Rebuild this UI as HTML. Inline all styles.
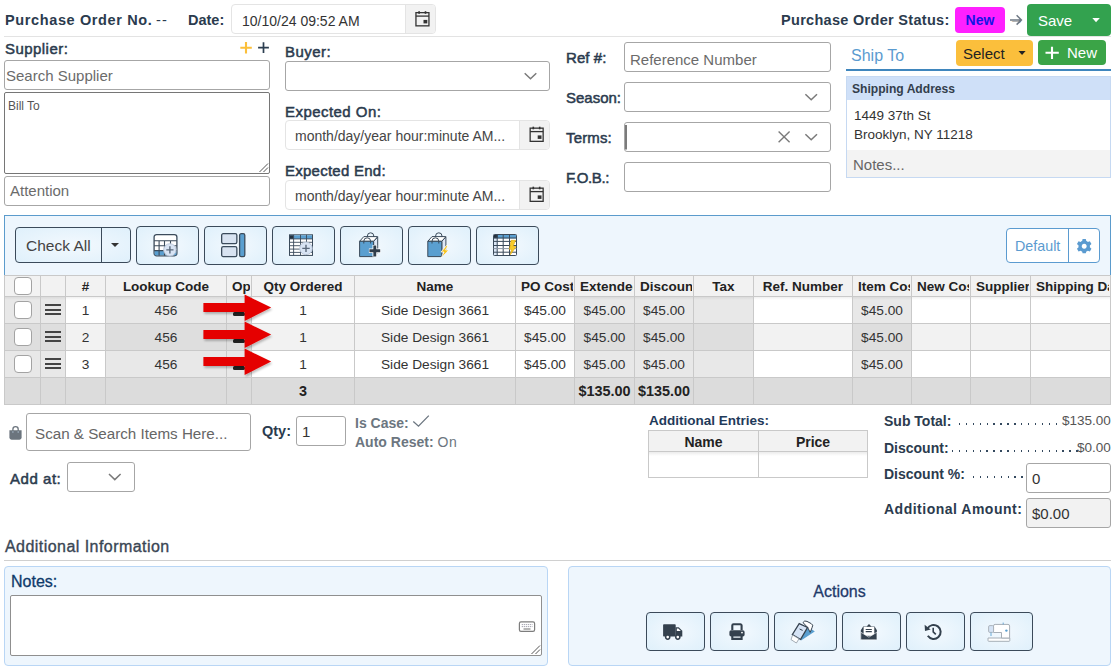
<!DOCTYPE html>
<html><head><meta charset="utf-8">
<style>
html,body{margin:0;padding:0;}
body{width:1115px;height:670px;overflow:hidden;background:#fff;position:relative;font-family:"Liberation Sans",sans-serif;color:#2a3a4c;}
.a{position:absolute;}
.t{position:absolute;white-space:nowrap;line-height:1;}
.b{font-weight:bold;}
.inp{position:absolute;box-sizing:border-box;border:1px solid #a6a6a6;border-radius:3px;background:#fff;}
.dt{position:absolute;box-sizing:border-box;border:1px solid #e4e4e4;border-radius:4px;background:#fff;overflow:hidden;}
.dt .cal{position:absolute;right:0;top:0;bottom:0;width:29px;background:#f2f2f2;border-left:1px solid #e4e4e4;}
.lbl{font-size:14.5px;font-weight:bold;color:#2b3b4e;}
.sb{font-size:15px;font-weight:normal;-webkit-text-stroke:0.5px #2b3b4e;letter-spacing:0.45px;}
.chev{position:absolute;width:9px;height:9px;border-right:1.6px solid #555;border-bottom:1.6px solid #555;transform:rotate(45deg);}
.tb{position:absolute;box-sizing:border-box;border:1px solid #3b4a5a;border-radius:4px;background:radial-gradient(ellipse at center,#f3f9fe 0%,#dff0fb 100%);}
.cell{position:absolute;box-sizing:border-box;border-right:1px solid #c9c9c9;border-bottom:1px solid #c9c9c9;}
.ct{position:absolute;left:0;right:0;text-align:center;white-space:nowrap;overflow:hidden;line-height:1;}
</style></head><body>

<!-- HEADER -->
<div class="t lbl" style="left:5px;top:13px;font-size:14.5px;letter-spacing:0.62px;">Purchase Order No.</div>
<div class="t" style="left:156px;top:13px;font-size:14.5px;letter-spacing:1.2px;color:#2b3b4e;">--</div>
<div class="t lbl" style="left:188px;top:13px;">Date:</div>
<div class="dt" style="left:231px;top:4px;width:205px;height:30px;">
  <div class="t" style="left:10px;top:9px;font-size:14px;color:#333;">10/10/24 09:52 AM</div>
  <div class="cal"></div>
</div>
<div class="a" style="left:4px;top:36px;width:1107px;height:1px;background:#e3e3e3;"></div>
<div class="t lbl" style="left:781px;top:13px;letter-spacing:0.3px;">Purchase Order Status:</div>
<div class="a" style="left:955px;top:7px;width:50px;height:26px;border-radius:4px;background:#ff20ff;"></div>
<div class="t b" style="left:955px;width:50px;text-align:center;top:13px;font-size:14px;color:#1414e6;">New</div>
<div class="t" style="left:1009px;top:11px;font-size:15px;color:#777;">&#8594;</div>
<div class="a" style="left:1027px;top:4px;width:84px;height:32px;border-radius:4px;background:#33a24f;"></div>
<div class="t" style="left:1038px;top:13px;font-size:15px;color:#fff;">Save</div>

<!-- SUPPLIER -->
<div class="t lbl sb" style="left:5px;top:41px;">Supplier:</div>
<div class="inp" style="left:4px;top:60px;width:266px;height:30px;">
  <div class="t" style="left:1px;top:7px;font-size:15px;color:#6b6b6b;">Search Supplier</div>
</div>
<div class="inp" style="left:4px;top:92px;width:266px;height:82px;border-color:#767676;border-radius:2px;">
  <div class="t" style="left:3px;top:7px;font-size:12px;color:#555;">Bill To</div>
</div>
<div class="inp" style="left:4px;top:176px;width:266px;height:30px;">
  <div class="t" style="left:5px;top:6px;font-size:15px;color:#6b6b6b;">Attention</div>
</div>

<!-- BUYER -->
<div class="t lbl sb" style="left:285px;top:44px;">Buyer:</div>
<div class="inp" style="left:285px;top:61px;width:265px;height:30px;"></div>
<div class="t lbl sb" style="left:285px;top:104px;">Expected On:</div>
<div class="dt" style="left:285px;top:120px;width:265px;height:30px;">
  <div class="t" style="left:9px;top:8px;font-size:14px;color:#454545;">month/day/year hour:minute AM...</div>
  <div class="cal"></div>
</div>
<div class="t lbl sb" style="left:285px;top:163px;letter-spacing:0.25px;">Expected End:</div>
<div class="dt" style="left:285px;top:180px;width:265px;height:30px;">
  <div class="t" style="left:9px;top:8px;font-size:14px;color:#454545;">month/day/year hour:minute AM...</div>
  <div class="cal"></div>
</div>

<!-- REF -->
<div class="t lbl sb" style="left:566px;top:50px;letter-spacing:0.08px;">Ref #:</div>
<div class="inp" style="left:624px;top:42px;width:207px;height:30px;">
  <div class="t" style="left:5px;top:9px;font-size:15px;color:#6b6b6b;">Reference Number</div>
</div>
<div class="t lbl sb" style="left:566px;top:90px;letter-spacing:0;">Season:</div>
<div class="inp" style="left:624px;top:82px;width:207px;height:30px;"></div>
<div class="t lbl sb" style="left:566px;top:130px;letter-spacing:0.15px;">Terms:</div>
<div class="inp" style="left:624px;top:122px;width:207px;height:30px;"></div>
<div class="t lbl sb" style="left:566px;top:170px;letter-spacing:-0.42px;">F.O.B.:</div>
<div class="inp" style="left:624px;top:162px;width:207px;height:30px;"></div>

<!-- SHIP TO -->
<div class="t" style="left:851px;top:48px;font-size:16px;color:#5b9bd0;">Ship To</div>
<div class="a" style="left:846px;top:69px;width:265px;height:2px;background:#3f86bd;"></div>
<div class="a" style="left:956px;top:40px;width:77px;height:26px;border-radius:4px;background:#fbbf3c;"></div>
<div class="t" style="left:963px;top:46px;font-size:15px;color:#222;">Select</div>
<div class="a" style="left:1038px;top:40px;width:68px;height:25px;border-radius:4px;background:#3ba447;"></div>
<div class="t" style="left:1067px;top:45px;font-size:15px;color:#fff;">New</div>
<div class="a" style="left:846px;top:76px;width:265px;height:102px;box-sizing:border-box;border:1px solid #c6d9f2;background:#fff;"></div>
<div class="a" style="left:847px;top:77px;width:263px;height:23px;background:#cfe0f8;"></div>
<div class="t b" style="left:852px;top:83px;font-size:12.1px;color:#333e4c;">Shipping Address</div>
<div class="t" style="left:854px;top:109px;font-size:13.5px;color:#333;">1449 37th St</div>
<div class="t" style="left:854px;top:128px;font-size:13.5px;color:#333;">Brooklyn, NY 11218</div>
<div class="a" style="left:847px;top:150px;width:263px;height:27px;background:#f3f3f3;"></div>
<div class="t" style="left:853px;top:157px;font-size:15px;color:#666;">Notes...</div>

<!-- TABLE PANEL -->
<div class="a" style="left:4px;top:215px;width:1107px;height:61px;box-sizing:border-box;border:1px solid #5b9bcc;border-bottom:none;background:#eef6fd;"></div>
<div class="tb" style="left:15px;top:227px;width:116px;height:36px;"></div>
<div class="a" style="left:101px;top:227px;width:1px;height:36px;background:#3b4a5a;"></div>
<div class="t" style="left:26px;top:238px;font-size:15.5px;color:#444;">Check All</div>
<div class="a" style="left:111px;top:243px;width:0;height:0;border-left:4px solid transparent;border-right:4px solid transparent;border-top:4px solid #333;"></div>
<div class="tb" style="left:136px;top:226px;width:63px;height:39px;"></div>
<div class="tb" style="left:204px;top:226px;width:63px;height:39px;"></div>
<div class="tb" style="left:272px;top:226px;width:63px;height:39px;"></div>
<div class="tb" style="left:340px;top:226px;width:63px;height:39px;"></div>
<div class="tb" style="left:408px;top:226px;width:63px;height:39px;"></div>
<div class="tb" style="left:476px;top:226px;width:63px;height:39px;"></div>
<div class="a" style="left:1006px;top:228px;width:94px;height:35px;box-sizing:border-box;border:1px solid #5b9bd0;border-radius:4px;background:#fff;"></div>
<div class="a" style="left:1068px;top:228px;width:1px;height:35px;background:#5b9bd0;"></div>
<div class="t" style="left:1015px;top:239px;font-size:14.3px;color:#5b9bd0;">Default</div>

<!-- TOOLICONS -->
<svg class="a" style="left:0;top:0;" width="1115" height="670">
<!-- icon1: grid + circle plus -->
<g transform="translate(153.5,234)">
  <rect x="0.6" y="0.6" width="22.8" height="21.2" rx="2.5" fill="#fff" stroke="#3b4b5b" stroke-width="1.3"/>
  <rect x="1.2" y="16.6" width="21.6" height="4.6" fill="#5a9fd0"/>
  <path d="M0.6,6.8 H23.4 M0.6,11.7 H23.4 M0.6,16.6 H23.4 M5.6,6.8 V21.8 M11,6.8 V21.8 M17,6.8 V21.8" stroke="#3b4b5b" stroke-width="1.1" fill="none"/>
  <circle cx="16.4" cy="15.9" r="6.2" fill="#d8e4f4" stroke="#b9c6d8" stroke-width="0.9"/>
  <path d="M16.4,12.3 V19.5 M12.8,15.9 H20" stroke="#59687a" stroke-width="1.4"/>
</g>
<!-- icon2: layout -->
<g transform="translate(221,233)">
  <rect x="0.65" y="0.65" width="15.2" height="10" rx="1.6" fill="#d8e3f1" stroke="#3b4b5b" stroke-width="1.3"/>
  <rect x="0.65" y="13.6" width="15.2" height="10" rx="1.6" fill="#d8e3f1" stroke="#3b4b5b" stroke-width="1.3"/>
  <rect x="18.6" y="0.65" width="5.2" height="22.9" rx="1.6" fill="#5a9fd0" stroke="#3b4b5b" stroke-width="1.3"/>
</g>
<!-- icon3: table w/ plus -->
<g transform="translate(289,234.3)">
  <rect x="0.5" y="0.5" width="23" height="20.6" fill="#fff" stroke="#3b4b5b" stroke-width="1"/>
  <rect x="1" y="1" width="22" height="3.6" fill="#5a9fd0"/>
  <rect x="1" y="1" width="3.6" height="3.6" fill="#24313e"/>
  <path d="M0.5,4.6 H23.5 M0.5,8 H23.5 M0.5,11.4 H23.5 M0.5,14.8 H23.5 M0.5,18.1 H23.5 M4.6,0.5 V21.1 M11.5,0.5 V21.1 M17.5,0.5 V21.1" stroke="#3b4b5b" stroke-width="0.9" fill="none"/>
  <circle cx="17" cy="14.1" r="6.3" fill="#d8e4f4" stroke="#b9c6d8" stroke-width="0.9"/>
  <path d="M17,10.4 V17.8 M13.3,14.1 H20.7" stroke="#59687a" stroke-width="1.4"/>
</g>
<!-- icon4: bag plus -->
<g stroke-linejoin="round">
  <path d="M373.6,241.3 L377.7,237.1 V252.5 L373.6,256.6 Z" fill="#dfe8f6" stroke="#3b4b5b" stroke-width="1"/>
  <path d="M359.6,241.3 L363.8,236.6 H377.7 L373.6,241.3 Z" fill="#fff" stroke="#3b4b5b" stroke-width="1"/>
  <path d="M367.4,237 V236 A3.2,3.2 0 0 1 373.8,236 V237" fill="none" stroke="#3b4b5b" stroke-width="1"/>
  <rect x="359.6" y="241.3" width="14" height="15.3" fill="#5a9fd0" stroke="#3b4b5b" stroke-width="1"/>
  <path d="M363.8,243.5 V241.2 A3.4,3.4 0 0 1 370.6,241.2 V243.5" fill="none" stroke="#3b4b5b" stroke-width="1"/>
  <path d="M374.8,245 V256.8 M368.9,250.8 H380.7" stroke="#fff" stroke-width="4.6"/>
  <path d="M374.8,245.5 V256.5 M369.4,250.8 H380.2" stroke="#2f3d4b" stroke-width="2.9"/>
</g>
<!-- icon5: bag lightning -->
<g stroke-linejoin="round">
  <path d="M441.8,241.3 L445.9,237.1 V252.5 L441.8,256.6 Z" fill="#dfe8f6" stroke="#3b4b5b" stroke-width="1"/>
  <path d="M427.8,241.3 L432,236.6 H445.9 L441.8,241.3 Z" fill="#fff" stroke="#3b4b5b" stroke-width="1"/>
  <path d="M435.6,237 V236 A3.2,3.2 0 0 1 442,236 V237" fill="none" stroke="#3b4b5b" stroke-width="1"/>
  <rect x="427.8" y="241.3" width="14" height="15.3" fill="#5a9fd0" stroke="#3b4b5b" stroke-width="1"/>
  <path d="M432,243.5 V241.2 A3.4,3.4 0 0 1 438.8,241.2 V243.5" fill="none" stroke="#3b4b5b" stroke-width="1"/>
  <path d="M446.5,245.5 L441,252 H444 L441.2,258 L448.8,250 H445.6 L448,245.5 Z" fill="#f6c31c" stroke="#fff" stroke-width="0.8"/>
</g>
<!-- icon6: table lightning -->
<g transform="translate(493,234)">
  <rect x="0.5" y="0.5" width="23" height="21" rx="0.8" fill="#fff" stroke="#3b4b5b" stroke-width="1"/>
  <rect x="1" y="1" width="22" height="3.4" fill="#5a9fd0"/>
  <rect x="1" y="1" width="3.8" height="3.4" fill="#24313e"/>
  <rect x="1" y="4.4" width="3.8" height="16.6" fill="#dce8f6"/>
  <path d="M0.5,4 H23.5 M0.5,7.4 H23.5 M0.5,11.5 H23.5 M0.5,18.2 H23.5 M4.2,0.5 V21.5 M10.2,0.5 V21.5 M16.5,0.5 V21.5" stroke="#3b4b5b" stroke-width="1" fill="none"/>
  <path d="M0.5,14.6 H23.5" stroke="#8a96a3" stroke-width="1" fill="none"/>
</g>
<path d="M511.2,240.3 H515.6 L513,246.6 H516 L510.3,254.8 L511.6,249.3 H509.4 Z" fill="#f7cc2a" stroke="#e0a800" stroke-width="0.6" stroke-linejoin="round"/>
<!-- gear -->
<g transform="translate(1084.2,246)">
  <path fill="#5b9bd0" d="M-1.6,-7 H1.6 L2.1,-4.9 A5.2,5.2 0 0 1 3.6,-4.05 L5.65,-4.7 L7.25,-1.95 L5.65,-0.5 A5.2,5.2 0 0 1 5.65,1.2 L7.25,2.65 L5.65,5.4 L3.6,4.75 A5.2,5.2 0 0 1 2.1,5.6 L1.6,7.3 H-1.6 L-2.1,5.6 A5.2,5.2 0 0 1 -3.6,4.75 L-5.65,5.4 L-7.25,2.65 L-5.65,1.2 A5.2,5.2 0 0 1 -5.65,-0.5 L-7.25,-1.95 L-5.65,-4.7 L-3.6,-4.05 A5.2,5.2 0 0 1 -2.1,-4.9 Z M0,-2.3 A2.5,2.5 0 1 0 0.01,-2.3 Z" fill-rule="evenodd"/>
</g>
</svg>

<!-- TABLE -->
<div class="a" style="left:4px;top:275px;width:1107px;height:129px;background:#fff;"></div>
<div class="a" style="left:4px;top:275px;width:1107px;height:21px;background:#f2f2f2;"></div>
<div class="a" style="left:4px;top:296px;width:36px;height:27px;background:#e8e8e8;"></div>
<div class="a" style="left:40px;top:296px;width:25px;height:27px;background:#e8e8e8;"></div>
<div class="a" style="left:65px;top:296px;width:40px;height:27px;background:#ffffff;"></div>
<div class="a" style="left:105px;top:296px;width:121px;height:27px;background:#e8e8e8;"></div>
<div class="a" style="left:226px;top:296px;width:25px;height:27px;background:#e8e8e8;"></div>
<div class="a" style="left:251px;top:296px;width:103px;height:27px;background:#ffffff;"></div>
<div class="a" style="left:354px;top:296px;width:161px;height:27px;background:#ffffff;"></div>
<div class="a" style="left:515px;top:296px;width:59px;height:27px;background:#ffffff;"></div>
<div class="a" style="left:574px;top:296px;width:60px;height:27px;background:#e8e8e8;"></div>
<div class="a" style="left:634px;top:296px;width:59px;height:27px;background:#e8e8e8;"></div>
<div class="a" style="left:693px;top:296px;width:60px;height:27px;background:#e8e8e8;"></div>
<div class="a" style="left:753px;top:296px;width:99px;height:27px;background:#ffffff;"></div>
<div class="a" style="left:852px;top:296px;width:59px;height:27px;background:#e8e8e8;"></div>
<div class="a" style="left:911px;top:296px;width:59px;height:27px;background:#ffffff;"></div>
<div class="a" style="left:970px;top:296px;width:60px;height:27px;background:#ffffff;"></div>
<div class="a" style="left:1030px;top:296px;width:80px;height:27px;background:#ffffff;"></div>
<div class="a" style="left:4px;top:323px;width:36px;height:27px;background:#dedede;"></div>
<div class="a" style="left:40px;top:323px;width:25px;height:27px;background:#dedede;"></div>
<div class="a" style="left:65px;top:323px;width:40px;height:27px;background:#f2f2f2;"></div>
<div class="a" style="left:105px;top:323px;width:121px;height:27px;background:#dedede;"></div>
<div class="a" style="left:226px;top:323px;width:25px;height:27px;background:#dedede;"></div>
<div class="a" style="left:251px;top:323px;width:103px;height:27px;background:#f2f2f2;"></div>
<div class="a" style="left:354px;top:323px;width:161px;height:27px;background:#f2f2f2;"></div>
<div class="a" style="left:515px;top:323px;width:59px;height:27px;background:#f2f2f2;"></div>
<div class="a" style="left:574px;top:323px;width:60px;height:27px;background:#dedede;"></div>
<div class="a" style="left:634px;top:323px;width:59px;height:27px;background:#dedede;"></div>
<div class="a" style="left:693px;top:323px;width:60px;height:27px;background:#dedede;"></div>
<div class="a" style="left:753px;top:323px;width:99px;height:27px;background:#f2f2f2;"></div>
<div class="a" style="left:852px;top:323px;width:59px;height:27px;background:#dedede;"></div>
<div class="a" style="left:911px;top:323px;width:59px;height:27px;background:#f2f2f2;"></div>
<div class="a" style="left:970px;top:323px;width:60px;height:27px;background:#f2f2f2;"></div>
<div class="a" style="left:1030px;top:323px;width:80px;height:27px;background:#f2f2f2;"></div>
<div class="a" style="left:4px;top:350px;width:36px;height:27px;background:#e8e8e8;"></div>
<div class="a" style="left:40px;top:350px;width:25px;height:27px;background:#e8e8e8;"></div>
<div class="a" style="left:65px;top:350px;width:40px;height:27px;background:#ffffff;"></div>
<div class="a" style="left:105px;top:350px;width:121px;height:27px;background:#e8e8e8;"></div>
<div class="a" style="left:226px;top:350px;width:25px;height:27px;background:#e8e8e8;"></div>
<div class="a" style="left:251px;top:350px;width:103px;height:27px;background:#ffffff;"></div>
<div class="a" style="left:354px;top:350px;width:161px;height:27px;background:#ffffff;"></div>
<div class="a" style="left:515px;top:350px;width:59px;height:27px;background:#ffffff;"></div>
<div class="a" style="left:574px;top:350px;width:60px;height:27px;background:#e8e8e8;"></div>
<div class="a" style="left:634px;top:350px;width:59px;height:27px;background:#e8e8e8;"></div>
<div class="a" style="left:693px;top:350px;width:60px;height:27px;background:#e8e8e8;"></div>
<div class="a" style="left:753px;top:350px;width:99px;height:27px;background:#ffffff;"></div>
<div class="a" style="left:852px;top:350px;width:59px;height:27px;background:#e8e8e8;"></div>
<div class="a" style="left:911px;top:350px;width:59px;height:27px;background:#ffffff;"></div>
<div class="a" style="left:970px;top:350px;width:60px;height:27px;background:#ffffff;"></div>
<div class="a" style="left:1030px;top:350px;width:80px;height:27px;background:#ffffff;"></div>
<div class="a" style="left:4px;top:377px;width:1107px;height:27px;background:#dcdcdc;"></div>
<div class="a" style="left:4px;top:296px;width:1107px;height:4px;background:linear-gradient(rgba(0,0,0,0.08),rgba(0,0,0,0));"></div>
<div class="a" style="left:4px;top:275px;width:1px;height:129px;background:#c9c9c9;"></div>
<div class="a" style="left:40px;top:275px;width:1px;height:129px;background:#c9c9c9;"></div>
<div class="a" style="left:65px;top:275px;width:1px;height:129px;background:#c9c9c9;"></div>
<div class="a" style="left:105px;top:275px;width:1px;height:129px;background:#c9c9c9;"></div>
<div class="a" style="left:226px;top:275px;width:1px;height:129px;background:#c9c9c9;"></div>
<div class="a" style="left:251px;top:275px;width:1px;height:129px;background:#c9c9c9;"></div>
<div class="a" style="left:354px;top:275px;width:1px;height:129px;background:#c9c9c9;"></div>
<div class="a" style="left:515px;top:275px;width:1px;height:129px;background:#c9c9c9;"></div>
<div class="a" style="left:574px;top:275px;width:1px;height:129px;background:#c9c9c9;"></div>
<div class="a" style="left:634px;top:275px;width:1px;height:129px;background:#c9c9c9;"></div>
<div class="a" style="left:693px;top:275px;width:1px;height:129px;background:#c9c9c9;"></div>
<div class="a" style="left:753px;top:275px;width:1px;height:129px;background:#c9c9c9;"></div>
<div class="a" style="left:852px;top:275px;width:1px;height:129px;background:#c9c9c9;"></div>
<div class="a" style="left:911px;top:275px;width:1px;height:129px;background:#c9c9c9;"></div>
<div class="a" style="left:970px;top:275px;width:1px;height:129px;background:#c9c9c9;"></div>
<div class="a" style="left:1030px;top:275px;width:1px;height:129px;background:#c9c9c9;"></div>
<div class="a" style="left:1110px;top:275px;width:1px;height:129px;background:#c9c9c9;"></div>
<div class="a" style="left:4px;top:275px;width:1107px;height:1px;background:#c9c9c9;"></div>
<div class="a" style="left:4px;top:296px;width:1107px;height:1px;background:#c9c9c9;"></div>
<div class="a" style="left:4px;top:323px;width:1107px;height:1px;background:#c9c9c9;"></div>
<div class="a" style="left:4px;top:350px;width:1107px;height:1px;background:#c9c9c9;"></div>
<div class="a" style="left:4px;top:377px;width:1107px;height:1px;background:#c9c9c9;"></div>
<div class="a" style="left:4px;top:404px;width:1107px;height:1px;background:#c9c9c9;"></div>
<div class="ct b" style="left:66px;width:39px;top:280px;font-size:13.5px;color:#222;">#</div>
<div class="ct b" style="left:106px;width:120px;top:280px;font-size:13.5px;color:#222;">Lookup Code</div>
<div class="ct b" style="left:227px;width:23px;top:280px;font-size:13.5px;color:#222;text-align:left;text-indent:5px;">Options</div>
<div class="ct b" style="left:252px;width:102px;top:280px;font-size:13.5px;color:#222;">Qty Ordered</div>
<div class="ct b" style="left:355px;width:160px;top:280px;font-size:13.5px;color:#222;">Name</div>
<div class="ct b" style="left:516px;width:57px;top:280px;font-size:13.5px;color:#222;text-align:left;text-indent:5px;">PO Cost</div>
<div class="ct b" style="left:575px;width:58px;top:280px;font-size:13.5px;color:#222;text-align:left;text-indent:5px;">Extended</div>
<div class="ct b" style="left:635px;width:57px;top:280px;font-size:13.5px;color:#222;text-align:left;text-indent:5px;">Discount</div>
<div class="ct b" style="left:694px;width:59px;top:280px;font-size:13.5px;color:#222;">Tax</div>
<div class="ct b" style="left:754px;width:98px;top:280px;font-size:13.5px;color:#222;">Ref. Number</div>
<div class="ct b" style="left:853px;width:57px;top:280px;font-size:13.5px;color:#222;text-align:left;text-indent:5px;">Item Cost</div>
<div class="ct b" style="left:912px;width:57px;top:280px;font-size:13.5px;color:#222;text-align:left;text-indent:5px;">New Cost</div>
<div class="ct b" style="left:971px;width:58px;top:280px;font-size:13.5px;color:#222;text-align:left;text-indent:5px;">Supplier</div>
<div class="ct b" style="left:1031px;width:78px;top:280px;font-size:13.5px;color:#222;text-align:left;text-indent:5px;">Shipping Date</div>
<div class="ct" style="left:66px;width:39px;top:304px;font-size:13.7px;color:#333;">1</div>
<div class="ct" style="left:106px;width:120px;top:304px;font-size:13.7px;color:#333;">456</div>
<div class="ct" style="left:252px;width:102px;top:304px;font-size:13.7px;color:#333;">1</div>
<div class="ct" style="left:355px;width:160px;top:304px;font-size:13.7px;color:#333;">Side Design 3661</div>
<div class="ct" style="left:516px;width:58px;top:304px;font-size:13.7px;color:#333;">$45.00</div>
<div class="ct" style="left:575px;width:59px;top:304px;font-size:13.7px;color:#333;">$45.00</div>
<div class="ct" style="left:635px;width:58px;top:304px;font-size:13.7px;color:#333;">$45.00</div>
<div class="ct" style="left:853px;width:58px;top:304px;font-size:13.7px;color:#333;">$45.00</div>
<div class="a" style="left:14px;top:301px;width:18px;height:18px;box-sizing:border-box;border:1.3px solid #a3a3a3;border-radius:4px;background:#fff;"></div>
<div class="a" style="left:45px;top:304.0px;width:16px;height:2px;background:#444;"></div>
<div class="a" style="left:45px;top:308.5px;width:16px;height:2px;background:#444;"></div>
<div class="a" style="left:45px;top:313.0px;width:16px;height:2px;background:#444;"></div>
<div class="ct" style="left:66px;width:39px;top:331px;font-size:13.7px;color:#333;">2</div>
<div class="ct" style="left:106px;width:120px;top:331px;font-size:13.7px;color:#333;">456</div>
<div class="ct" style="left:252px;width:102px;top:331px;font-size:13.7px;color:#333;">1</div>
<div class="ct" style="left:355px;width:160px;top:331px;font-size:13.7px;color:#333;">Side Design 3661</div>
<div class="ct" style="left:516px;width:58px;top:331px;font-size:13.7px;color:#333;">$45.00</div>
<div class="ct" style="left:575px;width:59px;top:331px;font-size:13.7px;color:#333;">$45.00</div>
<div class="ct" style="left:635px;width:58px;top:331px;font-size:13.7px;color:#333;">$45.00</div>
<div class="ct" style="left:853px;width:58px;top:331px;font-size:13.7px;color:#333;">$45.00</div>
<div class="a" style="left:14px;top:328px;width:18px;height:18px;box-sizing:border-box;border:1.3px solid #a3a3a3;border-radius:4px;background:#fff;"></div>
<div class="a" style="left:45px;top:331.0px;width:16px;height:2px;background:#444;"></div>
<div class="a" style="left:45px;top:335.5px;width:16px;height:2px;background:#444;"></div>
<div class="a" style="left:45px;top:340.0px;width:16px;height:2px;background:#444;"></div>
<div class="ct" style="left:66px;width:39px;top:358px;font-size:13.7px;color:#333;">3</div>
<div class="ct" style="left:106px;width:120px;top:358px;font-size:13.7px;color:#333;">456</div>
<div class="ct" style="left:252px;width:102px;top:358px;font-size:13.7px;color:#333;">1</div>
<div class="ct" style="left:355px;width:160px;top:358px;font-size:13.7px;color:#333;">Side Design 3661</div>
<div class="ct" style="left:516px;width:58px;top:358px;font-size:13.7px;color:#333;">$45.00</div>
<div class="ct" style="left:575px;width:59px;top:358px;font-size:13.7px;color:#333;">$45.00</div>
<div class="ct" style="left:635px;width:58px;top:358px;font-size:13.7px;color:#333;">$45.00</div>
<div class="ct" style="left:853px;width:58px;top:358px;font-size:13.7px;color:#333;">$45.00</div>
<div class="a" style="left:14px;top:355px;width:18px;height:18px;box-sizing:border-box;border:1.3px solid #a3a3a3;border-radius:4px;background:#fff;"></div>
<div class="a" style="left:45px;top:358.0px;width:16px;height:2px;background:#444;"></div>
<div class="a" style="left:45px;top:362.5px;width:16px;height:2px;background:#444;"></div>
<div class="a" style="left:45px;top:367.0px;width:16px;height:2px;background:#444;"></div>
<div class="a" style="left:14px;top:277px;width:18px;height:18px;box-sizing:border-box;border:1.3px solid #a3a3a3;border-radius:4px;background:#fff;"></div>
<div class="ct b" style="left:252px;width:102px;top:384px;font-size:14.4px;color:#222;">3</div>
<div class="ct b" style="left:575px;width:59px;top:384px;font-size:14.4px;color:#222;">$135.00</div>
<div class="ct b" style="left:635px;width:58px;top:384px;font-size:14.4px;color:#222;">$135.00</div>
<div class="a" style="left:233px;top:312px;width:12px;height:4px;border-radius:1.5px;background:#222;"></div>
<div class="a" style="left:233px;top:339px;width:12px;height:4px;border-radius:1.5px;background:#222;"></div>
<div class="a" style="left:233px;top:366px;width:12px;height:4px;border-radius:1.5px;background:#222;"></div>
<svg class="a" style="left:0;top:0;" width="1115" height="670"><defs><filter id="sh" x="-20%" y="-20%" width="140%" height="160%"><feDropShadow dx="1" dy="2" stdDeviation="1.2" flood-color="#000" flood-opacity="0.25"/></filter></defs><path filter="url(#sh)" d="M203.4,303.1 H244.6 V294.6 L271.2,307.6 L244.6,320.9 V312 H203.4 Z" fill="#e50606"/><path filter="url(#sh)" d="M203.4,330.1 H244.6 V321.6 L271.2,334.6 L244.6,347.9 V339 H203.4 Z" fill="#e50606"/><path filter="url(#sh)" d="M203.4,357.1 H244.6 V348.6 L271.2,361.6 L244.6,374.9 V366 H203.4 Z" fill="#e50606"/></svg>
<!-- BOTTOM -->
<div class="inp" style="left:26px;top:413px;width:225px;height:38px;">
  <div class="t" style="left:8px;top:12px;font-size:15.2px;color:#666;">Scan &amp; Search Items Here...</div>
</div>
<div class="t lbl" style="left:262px;top:424px;">Qty:</div>
<div class="inp" style="left:296px;top:416px;width:50px;height:30px;">
  <div class="t" style="left:5px;top:7px;font-size:15px;color:#333;">1</div>
</div>
<div class="t b" style="left:355px;top:416px;font-size:14px;color:#6c7680;">Is Case:</div>
<div class="t b" style="left:355px;top:435px;font-size:14px;color:#6c7680;">Auto Reset: <span style="font-weight:normal;letter-spacing:0.6px;">On</span></div>
<div class="t lbl sb" style="left:10px;top:471px;font-size:15px;letter-spacing:0.54px;">Add at:</div>
<div class="inp" style="left:67px;top:462px;width:68px;height:30px;"></div>

<div class="t b" style="left:649px;top:414px;font-size:13.5px;color:#1f3a5a;">Additional Entries:</div>
<div class="a" style="left:648px;top:430px;width:220px;height:48px;box-sizing:border-box;border:1px solid #c9c9c9;background:#fff;"></div>
<div class="a" style="left:649px;top:431px;width:218px;height:20px;background:#f2f2f2;border-bottom:1px solid #c9c9c9;"></div>
<div class="a" style="left:649px;top:452px;width:218px;height:4px;background:linear-gradient(rgba(0,0,0,0.08),rgba(0,0,0,0));"></div>
<div class="a" style="left:758px;top:431px;width:1px;height:46px;background:#c9c9c9;"></div>
<div class="ct b" style="left:649px;width:109px;top:435px;font-size:14px;color:#222;">Name</div>
<div class="ct b" style="left:759px;width:108px;top:435px;font-size:14px;color:#222;">Price</div>

<div class="t lbl" style="left:884px;top:414px;font-size:14px;">Sub Total:</div>
<div class="t" style="left:1062px;top:414px;font-size:13.5px;color:#555;">$135.00</div>
<div class="t lbl" style="left:884px;top:441px;font-size:14px;">Discount:</div>
<div class="t" style="left:1077px;top:441px;font-size:13.5px;color:#555;">$0.00</div>
<div class="t lbl" style="left:884px;top:467px;font-size:14px;">Discount %:</div>
<div class="inp" style="left:1026px;top:463px;width:85px;height:30px;">
  <div class="t" style="left:5px;top:7px;font-size:15px;color:#333;">0</div>
</div>
<div class="t lbl" style="left:884px;top:502px;font-size:14px;letter-spacing:0.5px;">Additional Amount:</div>
<div class="inp" style="left:1026px;top:498px;width:85px;height:30px;background:#f2f2f2;">
  <div class="t" style="left:5px;top:7px;font-size:15px;color:#333;">$0.00</div>
</div>

<div class="t" style="left:5px;top:539px;font-size:16px;color:#3a4654;-webkit-text-stroke:0.35px #3a4654;letter-spacing:0.45px;">Additional Information</div>
<div class="a" style="left:4px;top:560px;width:1107px;height:1px;background:#d0d0d0;"></div>
<div class="a" style="left:4px;top:566px;width:544px;height:100px;box-sizing:border-box;border:1px solid #b9d6f5;border-radius:4px;background:#eef6fd;"></div>
<div class="t" style="left:11px;top:574px;font-size:16px;color:#0e3a6a;-webkit-text-stroke:0.3px #0e3a6a;">Notes:</div>
<div class="inp" style="left:10px;top:595px;width:532px;height:61px;border-color:#8f8f8f;border-radius:2px;"></div>
<div class="a" style="left:568px;top:566px;width:543px;height:100px;box-sizing:border-box;border:1px solid #b9d6f5;border-radius:4px;background:#eef6fd;"></div>
<div class="t" style="left:568px;width:543px;text-align:center;top:584px;font-size:16px;color:#1f3a6a;-webkit-text-stroke:0.3px #1f3a6a;">Actions</div>
<div class="tb" style="left:646px;top:612px;width:59px;height:39px;"></div>
<div class="tb" style="left:710px;top:612px;width:59px;height:39px;"></div>
<div class="tb" style="left:774px;top:612px;width:63px;height:39px;"></div>
<div class="tb" style="left:842px;top:612px;width:59px;height:39px;"></div>
<div class="tb" style="left:906px;top:612px;width:59px;height:39px;"></div>
<div class="tb" style="left:970px;top:612px;width:63px;height:39px;"></div>

<!-- BOTICONS -->
<div class="a" style="left:959px;top:423px;width:100px;height:2px;background:repeating-linear-gradient(to right,#34495e 0 1.4px,transparent 1.4px 6.9px);"></div>
<div class="a" style="left:952px;top:450px;width:126px;height:2px;background:repeating-linear-gradient(to right,#34495e 0 1.4px,transparent 1.4px 6.9px);"></div>
<div class="a" style="left:973px;top:476px;width:51px;height:2px;background:repeating-linear-gradient(to right,#34495e 0 1.4px,transparent 1.4px 6.9px);"></div>
<svg class="a" style="left:0;top:0;" width="1115" height="670">
<!-- scan bag -->
<path d="M12.9,432.5 V429.3 A2.65,2.65 0 0 1 18.2,429.3 V432.5" fill="none" stroke="#6b747d" stroke-width="1.3"/>
<path d="M9.4,430.2 H21.6 V437.6 A2.1,2.1 0 0 1 19.5,439.7 H11.5 A2.1,2.1 0 0 1 9.4,437.6 Z" fill="#6b747d"/>
<rect x="12.3" y="431.2" width="1.2" height="1.6" fill="#9fb0c0"/><rect x="17.6" y="431.2" width="1.2" height="1.6" fill="#9fb0c0"/>
<!-- checkmark -->
<path d="M413.3,421.5 L418.5,426.2 L428.8,415.6" fill="none" stroke="#6c7680" stroke-width="1.3"/>
<!-- textarea resize handles -->
<path d="M259.5,172 L268,163.5 M263.5,172 L268,167.5" stroke="#555" stroke-width="1"/>
<path d="M531.5,654 L540,645.5 M535.5,654 L540,649.5" stroke="#555" stroke-width="1"/>
<!-- keyboard -->
<rect x="519.4" y="621.8" width="15.2" height="9.6" rx="1.6" fill="#fff" stroke="#7d7d7d" stroke-width="1.2"/>
<path d="M521.8,624.6 H532.4 M521.8,626.6 H532.4" stroke="#7f7f8f" stroke-width="0.9" stroke-dasharray="1 1"/>
<path d="M523.5,629 H530.5" stroke="#858585" stroke-width="1.2"/>
<!-- truck -->
<g fill="#34414e">
<rect x="663.1" y="624.2" width="12.6" height="12.4" rx="0.8"/>
<path d="M675.5,627.2 H678.7 L682.3,630.8 V636.6 H675.5 Z"/>
<circle cx="667.7" cy="637.1" r="2.8"/><circle cx="677.8" cy="637.1" r="2.8"/>
</g>
<path d="M676.8,628.4 H678.3 L680.9,631.1 H676.8 Z" fill="#fff"/>
<circle cx="667.7" cy="637.1" r="1.3" fill="#fff"/><circle cx="677.8" cy="637.1" r="1.3" fill="#fff"/>
<!-- printer -->
<path d="M732.3,630 V625.5 A1.2,1.2 0 0 1 733.5,624.3 H740.4 A1.2,1.2 0 0 1 741.6,625.5 V630" fill="none" stroke="#34414e" stroke-width="2.1"/>
<rect x="729.4" y="630.3" width="15.2" height="6.3" rx="1.8" fill="#34414e"/>
<path d="M732.3,635 V638.9 H741.6 V635" fill="none" stroke="#34414e" stroke-width="2.1"/>
<circle cx="742" cy="632.6" r="0.9" fill="#fff"/>
<!-- card reader -->
<path d="M799.5,637.8 L807.5,628.8 L812.5,629.8 L814.8,631.6 L801,640.5 Z" fill="#5a9fd0"/>
<path d="M803,622.6 A3,3 0 0 1 807,621.4 L811.2,623.6 A2.6,2.6 0 0 1 812.2,627.3 L810.2,632.4 L807.6,627.4 Z" fill="#fff" stroke="#34414e" stroke-width="1"/>
<path d="M792.3,634.6 L799.2,623.6 L807.6,627.4 L800.6,639.4 Z" fill="#d5e3f5" stroke="#34414e" stroke-width="1.2"/>
<path d="M799.6,629 L802.6,630.4" stroke="#34414e" stroke-width="1"/>
<path d="M792.6,635 L799,638.8 L796.4,643 L791,639.6 Z" fill="#fff" stroke="#7f8a95" stroke-width="0.7"/>
<!-- envelope -->
<path d="M860.8,630.2 L863.2,626.4 H866.6 L869,624 L871.4,626.4 H874.6 L876.9,630.2 V639.7 H860.8 Z" fill="#34414e"/>
<rect x="863.6" y="626.8" width="10.7" height="9" fill="#fff"/>
<path d="M865.7,629.5 H871.8 M865.7,631.6 H871.8" stroke="#34414e" stroke-width="1.1"/>
<path d="M860.8,632.2 L868.9,637.2 L876.9,632.2 V638.6 A1.1,1.1 0 0 1 875.8,639.7 H861.9 A1.1,1.1 0 0 1 860.8,638.6 Z" fill="#34414e" stroke="#fff" stroke-width="0.6"/>
<!-- history -->
<path d="M927.4,628.8 A7,7 0 1 1 927.8,635.8" fill="none" stroke="#34414e" stroke-width="2"/>
<path d="M924.6,624.8 L925,631 L930.6,629.6 Z" fill="#34414e"/>
<path d="M933.2,627.8 V631.8 L935.8,634.4" fill="none" stroke="#34414e" stroke-width="1.6"/>
<!-- sewing machine -->
<g fill="#fff" stroke="#a6aeb6" stroke-width="1">
<path d="M988,638 H1009.8 V640.5 A0.8,0.8 0 0 1 1009,641.3 H988.8 A0.8,0.8 0 0 1 988,640.5 Z"/>
<path d="M1001.5,638 V632.5 H993.5 V626 A1.6,1.6 0 0 1 995.1,624.4 H1008 A1.6,1.6 0 0 1 1009.6,626 V638 Z"/>
</g>
<rect x="988.6" y="625.6" width="5" height="6.8" rx="1.2" fill="#d5e3f5" stroke="#a6aeb6" stroke-width="0.9"/>
<path d="M1003.2,622.6 V624.4 M991,632.5 V636" stroke="#5a9fd0" stroke-width="0.9"/>
<circle cx="1006.4" cy="630.6" r="1.2" fill="#5a9fd0"/>
</svg>

<!-- ICONS -->
<svg class="a" style="left:0;top:0;" width="1115" height="670" viewBox="0 0 1115 670">

<g transform="translate(415.3,11.5)">
  <rect x="0.65" y="1.15" width="13" height="13.2" fill="none" stroke="#333" stroke-width="1.3"/>
  <line x1="0.6" y1="4.6" x2="13.7" y2="4.6" stroke="#333" stroke-width="1.3"/>
  <rect x="3" y="-0.3" width="1.6" height="2.6" fill="#333"/>
  <rect x="9.4" y="-0.3" width="1.6" height="2.6" fill="#333"/>
  <rect x="8.2" y="8.4" width="3.8" height="3.5" fill="#333"/>
</g>
<g transform="translate(529.5,127)">
  <rect x="0.65" y="1.15" width="13" height="13.2" fill="none" stroke="#333" stroke-width="1.3"/>
  <line x1="0.6" y1="4.6" x2="13.7" y2="4.6" stroke="#333" stroke-width="1.3"/>
  <rect x="3" y="-0.3" width="1.6" height="2.6" fill="#333"/>
  <rect x="9.4" y="-0.3" width="1.6" height="2.6" fill="#333"/>
  <rect x="8.2" y="8.4" width="3.8" height="3.5" fill="#333"/>
</g>
<g transform="translate(529.5,187)">
  <rect x="0.65" y="1.15" width="13" height="13.2" fill="none" stroke="#333" stroke-width="1.3"/>
  <line x1="0.6" y1="4.6" x2="13.7" y2="4.6" stroke="#333" stroke-width="1.3"/>
  <rect x="3" y="-0.3" width="1.6" height="2.6" fill="#333"/>
  <rect x="9.4" y="-0.3" width="1.6" height="2.6" fill="#333"/>
  <rect x="8.2" y="8.4" width="3.8" height="3.5" fill="#333"/>
</g>
<g transform="translate(524,72.5)"><polyline points="0.7,0.7 6.5,6.3 12.3,0.7" fill="none" stroke="#7a7a7a" stroke-width="1.5"/></g>
<g transform="translate(804.7,93.5)"><polyline points="0.7,0.7 6.5,6.3 12.3,0.7" fill="none" stroke="#7a7a7a" stroke-width="1.5"/></g>
<g transform="translate(804.7,133.5)"><polyline points="0.7,0.7 6.5,6.3 12.3,0.7" fill="none" stroke="#7a7a7a" stroke-width="1.5"/></g>
<g transform="translate(108.3,473.3)"><polyline points="0.7,0.7 6.5,6.3 12.3,0.7" fill="none" stroke="#7a7a7a" stroke-width="1.5"/></g>
<!-- terms X -->
<path d="M778.6,131.4 L789.6,142.2 M789.6,131.4 L778.6,142.2" stroke="#7a7a7a" stroke-width="1.4"/>
<rect x="625" y="125" width="2" height="24.5" fill="#7b7b7b"/>
<!-- plus icons -->
<path d="M246,42 V53.5 M240.3,47.7 H251.8" stroke="#fbbf3a" stroke-width="2.1"/>
<path d="M263.5,42.2 V53 M258.1,47.6 H268.9" stroke="#2c3e50" stroke-width="1.7"/>
<!-- header arrow -->
<path d="M1010,19.9 H1021.5 M1016.6,15.2 L1021.4,19.9 L1016.6,24.6" fill="none" stroke="#6e7884" stroke-width="1.5"/>
<!-- save caret -->
<path d="M1092.3,18 H1099.8 L1096.05,22.2 Z" fill="#fff"/>
<!-- select caret -->
<path d="M1018.5,51 H1025.6 L1022.05,55 Z" fill="#222"/>
<!-- new plus -->
<path d="M1052,46.8 V58.9 M1045.5,52.8 H1058.8" stroke="#fff" stroke-width="2.1"/>
</svg>

</body></html>
